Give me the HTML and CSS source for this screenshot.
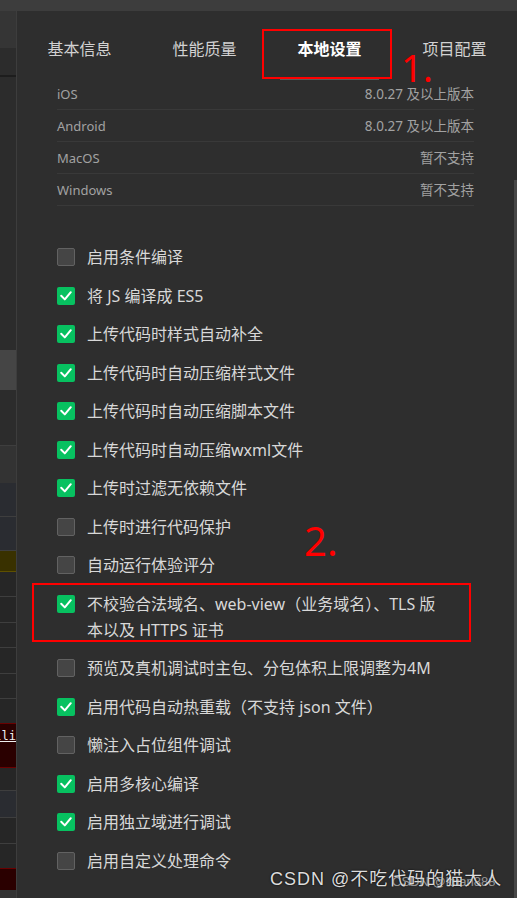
FILE: index.html
```html
<!DOCTYPE html>
<html lang="zh-CN">
<head>
<meta charset="utf-8">
<title>本地设置</title>
<link rel="stylesheet" href="styles.css">
</head>
<body>
<div class="topbar"></div>
<div class="main">
  <aside class="side">
    <div class="s s1"></div>
    <div class="s s2"></div>
    <div class="s s3"></div>
    <div class="s s4"></div>
    <div class="s s5"></div>
    <div class="s s6 ln"></div>
    <div class="s s7"></div>
    <div class="s s8 ln blue"></div>
    <div class="s s9 ln blue"></div>
    <div class="s s10 warn"></div>
    <div class="s s11 ln dk"></div>
    <div class="s s12 ln dk"></div>
    <div class="s s13 ln dk"></div>
    <div class="s s14 ln dk"></div>
    <div class="s s15 ln dk"></div>
    <div class="s s16 dk err-top"></div>
    <div class="s s17 err"><span class="code">lli</span></div>
    <div class="s s18 ln dk"></div>
    <div class="s s19 ln blue"></div>
    <div class="s s20 ln dk"></div>
    <div class="s s21 dk err-top"></div>
    <div class="s s22 err"></div>
    <div class="s s23"></div>
  </aside>

  <section class="panel">
    <nav class="tabs">
      <span class="tab">基本信息</span>
      <span class="tab">性能质量</span>
      <span class="tab active">本地设置</span>
      <span class="tab">项目配置</span>
    </nav>

    <div class="info">
      <div class="info-row"><span>iOS</span><span>8.0.27 及以上版本</span></div>
      <div class="info-row"><span>Android</span><span>8.0.27 及以上版本</span></div>
      <div class="info-row"><span>MacOS</span><span>暂不支持</span></div>
      <div class="info-row"><span>Windows</span><span>暂不支持</span></div>
    </div>

    <ul class="opts">
      <li class="opt"><span class="cb"></span><span class="lbl">启用条件编译</span></li>
      <li class="opt"><span class="cb on"><svg viewBox="0 0 18 18"><path d="M4.2 8.8 L7.8 12.4 L13.8 5.2"/></svg></span><span class="lbl">将 JS 编译成 ES5</span></li>
      <li class="opt"><span class="cb on"><svg viewBox="0 0 18 18"><path d="M4.2 8.8 L7.8 12.4 L13.8 5.2"/></svg></span><span class="lbl">上传代码时样式自动补全</span></li>
      <li class="opt"><span class="cb on"><svg viewBox="0 0 18 18"><path d="M4.2 8.8 L7.8 12.4 L13.8 5.2"/></svg></span><span class="lbl">上传代码时自动压缩样式文件</span></li>
      <li class="opt"><span class="cb on"><svg viewBox="0 0 18 18"><path d="M4.2 8.8 L7.8 12.4 L13.8 5.2"/></svg></span><span class="lbl">上传代码时自动压缩脚本文件</span></li>
      <li class="opt"><span class="cb on"><svg viewBox="0 0 18 18"><path d="M4.2 8.8 L7.8 12.4 L13.8 5.2"/></svg></span><span class="lbl">上传代码时自动压缩wxml文件</span></li>
      <li class="opt"><span class="cb on"><svg viewBox="0 0 18 18"><path d="M4.2 8.8 L7.8 12.4 L13.8 5.2"/></svg></span><span class="lbl">上传时过滤无依赖文件</span></li>
      <li class="opt"><span class="cb"></span><span class="lbl">上传时进行代码保护</span></li>
      <li class="opt"><span class="cb"></span><span class="lbl">自动运行体验评分</span></li>
      <li class="opt"><span class="cb on"><svg viewBox="0 0 18 18"><path d="M4.2 8.8 L7.8 12.4 L13.8 5.2"/></svg></span><span class="lbl">不校验合法域名、web-view（业务域名）、TLS 版<br>本以及 HTTPS 证书</span></li>
      <li class="opt"><span class="cb"></span><span class="lbl">预览及真机调试时主包、分包体积上限调整为4M</span></li>
      <li class="opt"><span class="cb on"><svg viewBox="0 0 18 18"><path d="M4.2 8.8 L7.8 12.4 L13.8 5.2"/></svg></span><span class="lbl">启用代码自动热重载（不支持 json 文件）</span></li>
      <li class="opt"><span class="cb"></span><span class="lbl">懒注入占位组件调试</span></li>
      <li class="opt"><span class="cb on"><svg viewBox="0 0 18 18"><path d="M4.2 8.8 L7.8 12.4 L13.8 5.2"/></svg></span><span class="lbl">启用多核心编译</span></li>
      <li class="opt"><span class="cb on"><svg viewBox="0 0 18 18"><path d="M4.2 8.8 L7.8 12.4 L13.8 5.2"/></svg></span><span class="lbl">启用独立域进行调试</span></li>
      <li class="opt"><span class="cb"></span><span class="lbl">启用自定义处理命令</span></li>
    </ul>

    <div class="thumb"></div>
  </section>
</div>

<div class="mark mark1"></div>
<div class="num num1">1.</div>
<div class="mark mark2"></div>
<div class="num num2">2.</div>

<div class="wm">CSDN @不吃代码的猫大人</div>
<div class="wm2">CSDN @kuan888</div>
</body>
</html>
```

FILE: styles.css
```css
* { box-sizing: border-box; }

html, body {
  margin: 0;
  padding: 0;
  width: 517px;
  height: 898px;
  overflow: hidden;
  background: #2e2e2e;
}

body {
  position: relative;
  font-family: "Noto Sans", "Noto Sans CJK SC", sans-serif;
}

.topbar {
  height: 11px;
  background: #3d3d3d;
}

.main {
  display: flex;
  height: 887px;
}

/* left background strip */
.side {
  width: 17px;
  flex: none;
  display: flex;
  flex-direction: column;
  border-right: 1px solid #3d3d3d;
  overflow: hidden;
}

.s { flex: none; background: #2c2c2c; }
.ln { border-bottom: 1px solid #3e3e3e; }
.s1 { height: 37px; background: #353535; }
.s2 { height: 27px; }
.s3 { height: 2px; background: #1d1d1d; }
.s4 { height: 273px; }
.s5 { height: 40px; background: #454545; }
.s6 { height: 56px; }
.s7 { height: 37px; background: #333333; }
.s8, .s9 { height: 34px; }
.blue { background: #2a2c31; }
.s10 { height: 21px; }
.warn { background: #393100; border-bottom: 1px solid #5e5000; }
.dk { background: #262626; }
.s11 { height: 25px; }
.s12 { height: 26px; }
.s13 { height: 25px; }
.s14 { height: 26px; }
.s15 { height: 25px; }
.s16 { height: 25px; }
.err-top { border-bottom: 1px solid #6a0000; }
.err { background: #2a0000; }
.s17 {
  height: 44px;
  border-bottom: 1px solid #6a0000;
  display: flex;
  justify-content: flex-end;
  align-items: flex-start;
  padding-top: 5px;
}
.code {
  font-family: "DejaVu Sans Mono", monospace;
  font-size: 12px;
  line-height: 14px;
  color: #f0f0f0;
  text-decoration: underline;
  white-space: nowrap;
}
.s18 { height: 23px; }
.s19 { height: 27px; }
.s20 { height: 26px; }
.s21 { height: 25px; }
.s22 { height: 21px; }
.s23 { flex: 1; background: #333333; }

/* settings panel */
.panel {
  position: relative;
  flex: 1;
  background: #2e2e2e;
}

.tabs {
  display: grid;
  grid-template-columns: repeat(4, 1fr);
  height: 67px;
  padding-top: 26px;
}

.tab {
  position: relative;
  text-align: center;
  font-size: 16px;
  line-height: 24px;
  color: #d2d2d2;
}

.tab.active {
  color: #ffffff;
  font-weight: bold;
}

.tab.active::after {
  content: "";
  position: absolute;
  left: 13px;
  right: 13px;
  top: 42px;
  height: 1px;
  background: #5a5a5a;
}

.info {
  padding: 0 43px 0 40px;
}

.info-row {
  display: flex;
  justify-content: space-between;
  height: 32px;
  padding-top: 1px;
  line-height: 30px;
  border-bottom: 1px solid #393939;
  font-size: 13px;
  color: #a2a2a2;
}

.info-row span:last-child {
  font-size: 13.5px;
}

.opts {
  list-style: none;
  margin: 32px 0 0;
  padding: 0 0 0 40px;
}

.opt {
  display: flex;
  align-items: flex-start;
  gap: 12px;
  padding: 6.25px 0;
}

.cb {
  flex: none;
  width: 18px;
  height: 18px;
  margin-top: 4px;
  border-radius: 2px;
  background: #454545;
  border: 1px solid #626262;
}

.cb.on {
  background: #07c160;
  border: none;
}

.cb svg {
  display: block;
  width: 18px;
  height: 18px;
}

.cb path {
  fill: none;
  stroke: #ffffff;
  stroke-width: 2;
  stroke-linecap: round;
  stroke-linejoin: round;
}

.lbl {
  font-size: 16px;
  line-height: 26px;
  color: #d8d8d8;
}

.thumb {
  position: absolute;
  right: 0;
  top: 169px;
  bottom: 0;
  width: 3px;
  background: #474747;
}

/* red annotations */
.mark {
  position: absolute;
  border: 2px solid #ff0000;
}
.mark1 { left: 262px; top: 29px; width: 130px; height: 50px; }
.mark2 { left: 32px; top: 583px; width: 439px; height: 59px; }

.num {
  position: absolute;
  color: #ff0000;
  font-family: "Noto Sans", sans-serif;
  line-height: 1;
}
.num1 { left: 401px; top: 48px; font-size: 38px; }
.num2 { left: 304px; top: 521px; font-size: 40px; }

/* watermark */
.wm {
  position: absolute;
  left: 270px;
  top: 868px;
  font-family: "Liberation Sans", "Noto Sans CJK SC", sans-serif;
  font-size: 18px;
  letter-spacing: 1px;
  line-height: 22px;
  color: #dcdcdc;
  text-shadow: 0 0 2px #000;
  white-space: nowrap;
}

.wm2 {
  position: absolute;
  left: 392px;
  top: 874px;
  font-family: "Liberation Sans", sans-serif;
  font-size: 13px;
  line-height: 16px;
  color: rgba(200, 200, 200, 0.7);
  white-space: nowrap;
}
```
